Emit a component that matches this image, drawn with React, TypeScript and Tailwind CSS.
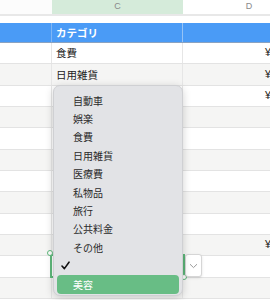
const rows: { c: string; d: string }[] = [
  { c: '食費', d: '¥1,280' },
  { c: '日用雑貨', d: '¥2,450' },
  { c: '', d: '¥980' },
  { c: '', d: '' },
  { c: '', d: '' },
  { c: '', d: '' },
  { c: '', d: '' },
  { c: '', d: '' },
  { c: '', d: '' },
  { c: '', d: '¥3,600' },
  { c: '', d: '' },
  { c: '', d: '' },
];

const options = ['自動車', '娯楽', '食費', '日用雑貨', '医療費', '私物品', '旅行', '公共料金', 'その他'];

export default function App() {
  return (
    <div className="relative w-[270px] h-[300px] overflow-hidden bg-white font-['Noto_Sans_CJK_JP','Liberation_Sans',sans-serif] text-[#222]">
      {/* column letters */}
      <div className="flex h-[16px] border-b-2 border-[#e8e8e8]">
        <div className="w-[52px] shrink-0 bg-[#fcfcfc]" />
        <div className="w-[131px] shrink-0 bg-[#d5ebda] flex items-center justify-center text-[9px] text-[#8a8a8a] font-['Liberation_Sans',sans-serif]">C</div>
        <div className="w-[132px] shrink-0 flex items-center justify-center text-[9px] text-[#8a8a8a] font-['Liberation_Sans',sans-serif]">D</div>
      </div>
      <div className="h-[7px]" />

      {/* header row */}
      <div className="flex h-[20px] bg-[#4a9bf6] border-b border-[#8aa2c0]">
        <div className="w-[52px] shrink-0 border-r border-[#7fb6f5]" />
        <div className="w-[131px] shrink-0 border-r border-[#95c3f6] flex items-center pl-[4px] text-[10.5px] font-bold text-white">カテゴリ</div>
        <div className="w-[132px] shrink-0" />
      </div>

      {/* body rows */}
      {rows.map((r, i) => (
        <div key={i} className={`flex h-[21.33px] border-b border-[#e3e3e3] ${i % 2 === 1 ? 'bg-[#f5f5f4]' : 'bg-white'}`}>
          <div className="w-[52px] shrink-0 border-r border-[#e6e6e6]" />
          <div className="w-[131px] shrink-0 border-r border-[#e6e6e6] flex items-center pl-[4px] text-[10.5px]">{r.c}</div>
          <div className="w-[132px] shrink-0 flex items-center pl-[82px] text-[10.5px] whitespace-nowrap font-['Liberation_Sans',sans-serif]">{r.d}</div>
        </div>
      ))}

      {/* selected cell */}
      <div className="absolute left-[50px] top-[254px] w-[135px] h-[24px] border-2 border-[#5fb97c]" />
      <div className="absolute left-[47px] top-[250px] w-[6px] h-[6px] rounded-full bg-white border border-[#5fb97c]" />
      <div className="absolute left-[181px] top-[274px] w-[6px] h-[6px] rounded-full bg-white border border-[#5fb97c]" />
      <div className="absolute left-[185px] top-[254px] w-[17px] h-[23px] bg-white border border-[#d6d6d6] rounded-[3px] flex items-center justify-center shadow-sm">
        <svg width="9" height="6" viewBox="0 0 9 6" fill="none">
          <path d="M1 1.2 L4.5 4.6 L8 1.2" stroke="#9a9a9a" strokeWidth="1" />
        </svg>
      </div>

      {/* dropdown menu */}
      <div className="absolute left-[53px] top-[85px] w-[130px] h-[211px] rounded-[7px] bg-[#e2e3e6] border border-[#cfd0d3] shadow-[0_2px_8px_rgba(0,0,0,0.18)] px-[3px] pt-[5px] text-[10px] text-[#2a2a2a]">
        {options.map((o) => (
          <div key={o} className="h-[18.4px] flex items-center pl-[16px]">{o}</div>
        ))}
        <div className="h-[18.4px] flex items-center pl-[4px]">
          <svg width="9" height="9" viewBox="0 0 9 9" fill="none">
            <path d="M1 5 L3.4 7.6 L8 1.2" stroke="#111" strokeWidth="1.6" strokeLinecap="round" strokeLinejoin="round" />
          </svg>
        </div>
        <div className="h-[19px] flex items-center pl-[16px] rounded-[4px] bg-[#68bd85] text-white">美容</div>
      </div>
    </div>
  );
}
